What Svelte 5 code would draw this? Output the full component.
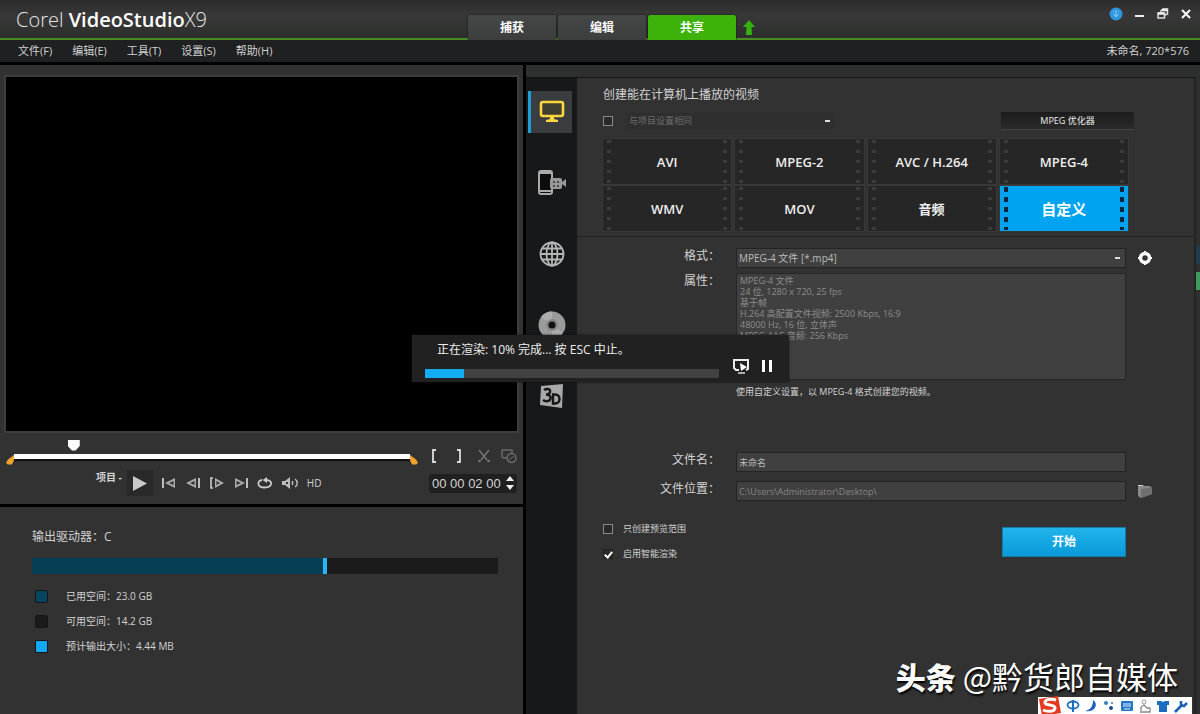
<script lang="ts">
	const steps = ['捕获', '编辑', '共享'];
	const menus = ['文件(F)', '编辑(E)', '工具(T)', '设置(S)', '帮助(H)'];
	const formats = ['AVI', 'MPEG-2', 'AVC / H.264', 'MPEG-4', 'WMV', 'MOV', '音频', '自定义'];
	const profile = [
		'MPEG-4 文件',
		'24 位, 1280 x 720, 25 fps',
		'基于帧',
		'H.264 高配置文件视频: 2500 Kbps, 16:9',
		'48000 Hz, 16 位, 立体声',
		'MPEG AAC 音频: 256 Kbps'
	];
	const drive = [
		{ kind: 'used', label: '已用空间：', size: '23.0 GB' },
		{ kind: 'free', label: '可用空间：', size: '14.2 GB' },
		{ kind: 'output', label: '预计输出大小：', size: '4.44 MB' }
	];
	const usedPercent = 62.5;
	const renderPercent = 13.3;

	let activeStep = $state('共享');
	let activeFormat = $state('自定义');
	let position = $state(14);
	let fileName = $state('未命名');
	let location = $state('C:\\Users\\Administrator\\Desktop\\');
	let timecode = $state('00 00 02 00');
	let smartRender = $state(true);
	let previewOnly = $state(false);
	let sameAsProject = $state(false);
</script>

<div class="app">
	<header class="titlebar">
		<h1 class="logo">Corel <b>VideoStudio</b>X9</h1>
		<nav class="steps">
			{#each steps as step}
				<button class="step" class:active={activeStep === step} onclick={() => (activeStep = step)}>{step}</button>
			{/each}
			<button class="icon-btn upload" aria-label="上传">
				<svg width="12" height="15" viewBox="0 0 12 15"><path d="M6 0 12 7H8.500L9 15H3L3.500 7H0Z" fill="#35b20d" /></svg>
			</button>
		</nav>
		<div class="window-buttons">
			<button class="icon-btn" aria-label="信息">
				<svg width="14" height="14" viewBox="0 0 14 14"><circle cx="7" cy="7" r="6.500" fill="#2d95dc" /><path d="M7 3v6M4.500 7 7 10 9.500 7M4 4.500h1M9 4.500h1" stroke="#8ed0fa" fill="none" /></svg>
			</button>
			<button class="icon-btn" aria-label="最小化">
				<svg width="10" height="14" viewBox="0 0 10 14"><path d="M0 8h9v2H0z" fill="#eee" /></svg>
			</button>
			<button class="icon-btn" aria-label="还原">
				<svg width="12" height="14" viewBox="0 0 12 14"><path d="M4 5V3.500l2-1.500h4.500v5L8 8M1 6h6.500v5H1z" fill="none" stroke="#ddd" stroke-width="1.500" /><path d="M1 6.500h6.500M5 3h5.500" stroke="#eee" stroke-width="2.500" /></svg>
			</button>
			<button class="icon-btn" aria-label="关闭">
				<svg width="10" height="14" viewBox="0 0 10 14"><path d="m1 3 8 8M9 3l-8 8" stroke="#fff" stroke-width="2" /></svg>
			</button>
		</div>
	</header>

	<div class="menubar">
		<div class="menus">
			{#each menus as menu}
				<button class="menu">{menu}</button>
			{/each}
		</div>
		<span>未命名, 720*576</span>
	</div>

	<main class="workspace">
		<div class="left">
			<section class="preview">
				<div class="video"></div>
				<div class="scrub-row">
					<div class="scrubber">
						<svg width="8" height="11" viewBox="0 0 8 11"><path d="M8 1v5L6 10.500H2L0 9 2 5.500Z" fill="#f2a32c" /></svg>
						<input type="range" min="0" max="100" bind:value={position} aria-label="播放位置" />
						<svg width="8" height="11" viewBox="0 0 8 11"><path d="M0 1v5L2 10.500H6L8 9 6 5.500Z" fill="#f2a32c" /></svg>
					</div>
					<div class="trim-buttons">
						<button class="icon-btn" aria-label="开始标记"><svg width="16" height="16" viewBox="0 0 16 16"><path d="M10 2H7v12h3" fill="none" stroke="#ddd" stroke-width="1.800" /></svg></button>
						<button class="icon-btn" aria-label="结束标记"><svg width="16" height="16" viewBox="0 0 16 16"><path d="M6 2h3v12H6" fill="none" stroke="#ddd" stroke-width="1.800" /></svg></button>
						<button class="icon-btn" aria-label="剪切"><svg width="16" height="16" viewBox="0 0 16 16"><path d="m3 2 8 10M13 2 5 12" stroke="#777" stroke-width="1.300" /><circle cx="3.500" cy="13" r="1.300" fill="#777" /><circle cx="12.500" cy="13" r="1.300" fill="#777" /></svg></button>
						<button class="icon-btn" aria-label="扩大"><svg width="16" height="16" viewBox="0 0 16 16"><path d="M6 10H2L1 8V2h10v3" fill="none" stroke="#6a6a6a" stroke-width="1.500" /><circle cx="10.500" cy="10" r="4.500" fill="none" stroke="#6a6a6a" stroke-width="1.500" /><path d="m8 12 5-4" stroke="#6a6a6a" /></svg></button>
					</div>
				</div>
				<div class="transport">
					<span class="mode">项目 -</span>
					<div class="player-buttons">
						<button class="icon-btn play" aria-label="播放"><svg width="16" height="16" viewBox="0 0 16 16"><path d="M1 1v15l14-7.500Z" fill="#c9c9c9" /></svg></button>
						<button class="icon-btn" aria-label="起始"><svg width="16" height="12" viewBox="0 0 16 12"><path d="M2 1v10" stroke="#ccc" stroke-width="1.800" /><path d="M14 1v10L4 6Z" fill="#aaa" /><path d="M12.500 4v4L8 6Z" fill="#333" /></svg></button>
						<button class="icon-btn" aria-label="上一帧"><svg width="16" height="12" viewBox="0 0 16 12"><path d="M14 1v10" stroke="#ccc" stroke-width="1.800" /><path d="M11 1v10L1 6Z" fill="#aaa" /><path d="M9.500 4v4L5 6Z" fill="#333" /></svg></button>
						<button class="icon-btn" aria-label="下一帧"><svg width="16" height="12" viewBox="0 0 16 12"><path d="M4 1H2v10h2" fill="none" stroke="#ccc" stroke-width="1.600" /><path d="M6 1v10l9-5Z" fill="#aaa" /><path d="M7.500 4v4L11 6Z" fill="#333" /></svg></button>
						<button class="icon-btn" aria-label="结束"><svg width="16" height="12" viewBox="0 0 16 12"><path d="M14 1v10" stroke="#ccc" stroke-width="1.800" /><path d="M2 1v10l10-5Z" fill="#aaa" /><path d="M3.500 4v4L8 6Z" fill="#333" /></svg></button>
						<button class="icon-btn" aria-label="重复"><svg width="16" height="12" viewBox="0 0 16 12"><path d="M5 3C2 3.500 1 5 1.500 7.500c1 4 11 4 12.500 0C15 5 13 3 9 3" fill="none" stroke="#ccc" stroke-width="1.800" /><path d="M10 0 5.500 3 10 6Z" fill="#ccc" /></svg></button>
						<button class="icon-btn" aria-label="音量"><svg width="18" height="12" viewBox="0 0 18 12"><path d="M1 4h3l5-4v12L4 8H1Z" fill="#bbb" /><path d="M5 5h2v2H5z" fill="#333" /><path d="M11.500 4v4M14 2c3 2 3 6 0 8" fill="none" stroke="#bbb" stroke-width="1.500" /></svg></button>
						<button class="icon-btn hd">HD</button>
					</div>
					<div class="timecode">
						<input bind:value={timecode} aria-label="时间码" />
						<button class="icon-btn" aria-label="调整时间码"><svg width="8" height="16" viewBox="0 0 8 16"><path d="m4 1 4 5H0ZM4 15l4-5H0Z" fill="#eee" /></svg></button>
					</div>
				</div>
			</section>

			<section class="drive">
				<h2>输出驱动器：C</h2>
				<div class="drive-bar" role="meter" aria-valuenow={usedPercent} aria-label="已用空间">
					<div class="drive-used" style="width: {usedPercent}%"></div>
				</div>
				<ul>
					{#each drive as item}
						<li><i class="swatch {item.kind}"></i>{item.label}{item.size}</li>
					{/each}
				</ul>
			</section>
		</div>

		<div class="right">
			<aside class="targets">
				<button class="target active" aria-label="计算机">
					<svg width="26" height="24" viewBox="0 0 26 24"><rect x="2" y="2" width="22" height="14" rx="2" fill="#3f3d30" stroke="#fbd63d" stroke-width="2.600" /><path d="M11 16h4v3l4 1v2H7v-2l4-1Z" fill="#fbd63d" /></svg>
				</button>
				<button class="target" aria-label="设备">
					<svg width="30" height="28" viewBox="0 0 30 28"><rect x="2" y="2" width="13" height="23" rx="2" fill="#0d0d0d" stroke="#aaa" stroke-width="2" /><path d="M2 22h13M2 4h13" stroke="#aaa" stroke-width="2" /><rect x="13" y="9" width="12" height="11" rx="2" fill="#999" /><path d="m25 13 4-3v8l-4-3Z" fill="#999" /><path d="M16 12h2v2h-2zM20 12h2v2h-2zM16 16h2v2h-2zM20 16h2v2h-2z" fill="#4a4a4a" /></svg>
				</button>
				<button class="target" aria-label="网络">
					<svg width="26" height="26" viewBox="0 0 26 26" fill="none" stroke="#b5b5b5" stroke-width="1.800"><circle cx="13" cy="13" r="11.500" /><ellipse cx="13" cy="13" rx="5.500" ry="11.500" /><path d="M13 1v24M1 13h24M3 7.500h20M3 18.500h20" /></svg>
				</button>
				<button class="target" aria-label="光盘">
					<svg width="28" height="28" viewBox="0 0 28 28"><circle cx="14" cy="14" r="13.500" fill="#9b9b9b" /><path d="M14 14 3 6A13.500 13.500 0 0 1 14 .5ZM14 14l11 8a13.500 13.500 0 0 1-11 5.500Z" fill="#adadad" /><circle cx="14" cy="14" r="6" fill="#858585" /><circle cx="14" cy="14" r="3.500" fill="#111" /></svg>
				</button>
				<button class="target" aria-label="3D 影片">
					<svg width="26" height="26" viewBox="0 0 26 26"><path d="M2 3 24 1l-1 24L1 22Z" fill="#a8a8a8" /><path d="M5 7c3-2 7-1 6 2-.5 2-2 2.500-4 2.500 3 0 5 1.500 4.500 4-.5 3-5 3.500-7.500 1.500M14 11.500v9h2c6 0 6-9 0-9Z" fill="none" stroke="#161616" stroke-width="2.400" /></svg>
				</button>
			</aside>

			<div class="share">
				<section class="format-picker">
					<h2>创建能在计算机上播放的视频</h2>
					<div class="project-row">
						<input type="checkbox" bind:checked={sameAsProject} aria-label="与项目设置相同" />
						<select class="same-as" disabled aria-label="项目设置">
							<option>与项目设置相同</option>
						</select>
						<button class="optimizer">MPEG 优化器</button>
					</div>
					<div class="formats">
						{#each formats as format}
							<button class="format" class:selected={activeFormat === format} onclick={() => (activeFormat = format)}>
								<span>{format}</span>
							</button>
						{/each}
					</div>
				</section>

				<section class="settings">
					<div class="row">
						<label for="format">格式：</label>
						<select id="format" class="field">
							<option>MPEG-4 文件 [*.mp4]</option>
						</select>
						<button class="icon-btn" aria-label="选项">
							<svg width="14" height="14" viewBox="0 0 14 14"><circle cx="7" cy="7" r="4.500" fill="none" stroke="#fff" stroke-width="3.500" /><path d="M7 0v2M7 12v2M0 7h2M12 7h2" stroke="#fff" stroke-width="2" /></svg>
						</button>
					</div>
					<div class="row profile-row">
						<span class="label">属性：</span>
						<div class="profile">
							{#each profile as line}
								<p>{line}</p>
							{/each}
						</div>
					</div>
					<p class="hint">使用自定义设置，以 MPEG-4 格式创建您的视频。</p>
					<div class="row">
						<label for="filename">文件名：</label>
						<input id="filename" class="field name" bind:value={fileName} />
					</div>
					<div class="row">
						<label for="location">文件位置：</label>
						<input id="location" class="field path" bind:value={location} />
						<button class="icon-btn" aria-label="浏览">
							<svg width="16" height="16" viewBox="0 0 16 16"><path d="M1 2h5l1 1.500h6V6H1Z" fill="#d0d0d0" /><path d="M1 3h12l2 2v6L4 15 1 13Z" fill="#8b8b8b" /><path d="m4 6 11-2v7L4 15Z" fill="#707070" /></svg>
						</button>
					</div>
					<div class="finish">
						<div class="checks">
							<label><input type="checkbox" bind:checked={previewOnly} />只创建预览范围</label>
							<label><input type="checkbox" bind:checked={smartRender} />启用智能渲染</label>
						</div>
						<button class="start">开始</button>
					</div>
				</section>
			</div>
			<div class="edge"><i></i><i></i></div>
		</div>
	</main>

	<div class="rendering" role="dialog" aria-label="渲染进度">
		<p>正在渲染: 10% 完成... 按 ESC 中止。</p>
		<div class="render-row">
			<div class="render-bar" role="progressbar" aria-valuenow={renderPercent} aria-label="进度">
				<div class="render-done" style="width: {renderPercent}%"></div>
			</div>
			<button class="icon-btn" aria-label="预览">
				<svg width="18" height="18" viewBox="0 0 18 18"><path d="M7 13H4L2 11V3h14v9l-2 1" fill="none" stroke="#eee" stroke-width="2" /><path d="m8 6 7 4-6 4Z" fill="#fff" /><path d="M6 16h7" stroke="#ddd" stroke-width="1.500" /></svg>
			</button>
			<button class="icon-btn" aria-label="暂停">
				<svg width="14" height="14" viewBox="0 0 14 14"><path d="M2 1h3v12H2zM9 1h3v12H9z" fill="#fff" /></svg>
			</button>
		</div>
	</div>

	<div class="watermark"><b>头条</b> @黔货郎自媒体</div>

	<div class="ime">
		<svg class="sogou" width="24" height="20" viewBox="0 0 24 20"><path d="M1 3 20 0l3 17-19 3Z" fill="#e4391f" /><path d="M18 4C12 2 6 4 7 7c1 3 10 1 10 5 0 4-8 4-12 2" fill="none" stroke="#fff" stroke-width="3" /></svg>
		<svg width="14" height="14" viewBox="0 0 14 14"><path d="M7 1v12" stroke="#1c6cc0" stroke-width="2" /><ellipse cx="7" cy="6" rx="5.500" ry="3.500" fill="none" stroke="#1c6cc0" stroke-width="1.800" /></svg>
		<svg width="14" height="14" viewBox="0 0 14 14"><path d="M9 1c6 4 2 13-8 11 5-1 8-4 8-11Z" fill="#1c5fc0" /></svg>
		<svg width="14" height="14" viewBox="0 0 14 14"><circle cx="4" cy="4" r="2" fill="#3c7ac0" /><circle cx="9" cy="9" r="2" fill="#1c4c90" /><circle cx="10" cy="4" r="1" fill="#3c7ac0" /></svg>
		<svg width="14" height="14" viewBox="0 0 14 14"><rect x="1" y="2" width="12" height="10" rx="1" fill="#2678c4" /><path d="M3 5h8M3 7h8M4 10h6" stroke="#d8ecff" /></svg>
		<svg width="14" height="14" viewBox="0 0 14 14"><circle cx="6" cy="3" r="2" fill="none" stroke="#999" /><path d="M3 12V8l3-2 3 3h3v4H2" fill="none" stroke="#888" stroke-width="1.300" /></svg>
		<svg width="14" height="14" viewBox="0 0 14 14"><path d="M1 2h4l2 1 2-1h4v4h-2v7H3V6H1Z" fill="#1c6cc0" /></svg>
		<svg width="14" height="14" viewBox="0 0 14 14"><path d="M1 13 8 6M7 2v4l3 1 3-3" fill="none" stroke="#1c5fb0" stroke-width="2.600" /></svg>
	</div>
</div>

<style>
	:global(body) {
		background: #323232;
	}

	.app {
		position: relative;
		display: flex;
		flex-direction: column;
		min-height: 100vh;
		overflow: hidden;
		background: #000;
		color: #d2d2d2;
		font-family: 'Open Sans', 'Noto Sans CJK SC', sans-serif;
		font-size: 11px;
		line-height: 16px;
	}

	h1,
	h2,
	p,
	ul {
		margin: 0;
		padding: 0;
		font-weight: normal;
	}

	button,
	input,
	select {
		box-sizing: border-box;
		margin: 0;
		font: inherit;
		color: inherit;
	}

	button {
		padding: 0;
		border: 0;
		background: none;
		cursor: pointer;
	}

	svg {
		display: block;
		flex: none;
	}

	.icon-btn {
		display: flex;
		align-items: center;
		justify-content: center;
	}

	/* Title bar */
	.titlebar {
		display: grid;
		grid-template-columns: 39fr 30fr 31fr;
		height: 38px;
		border-bottom: 2px solid #488e22;
		background: linear-gradient(#2b2b2b, #383838 40%, #2c2f2c);
	}

	.logo {
		padding-left: 16px;
		color: #e6e6e6;
		font-size: 20px;
		font-weight: 300;
		line-height: 40px;
		white-space: nowrap;
	}

	.logo b {
		color: #fff;
		font-weight: 600;
	}

	.steps {
		display: flex;
		align-items: flex-end;
		gap: 2px;
	}

	.step {
		width: 88px;
		height: 25px;
		border-radius: 2px 2px 0 0;
		background: linear-gradient(#464747, #3c3d3d);
		color: #fff;
		font-size: 12px;
		font-weight: bold;
		box-shadow: 0 0 2px #111;
	}

	.step.active {
		background: #3cb20b;
	}

	.upload {
		height: 25px;
		padding-left: 5px;
	}

	.window-buttons {
		display: flex;
		justify-content: flex-end;
		align-items: flex-start;
		gap: 12px;
		padding: 7px 9px 0 0;
	}

	.menubar {
		display: flex;
		justify-content: space-between;
		align-items: center;
		height: 22px;
		margin-bottom: 3px;
		padding: 0 11px 0 18px;
		background: #1e2021;
	}

	.menus {
		display: flex;
		gap: 20px;
	}

	/* Workspace */
	.workspace {
		display: grid;
		grid-template-columns: 523fr 674fr;
		flex: 1;
		gap: 3px;
	}

	.left {
		display: flex;
		flex-direction: column;
		gap: 3px;
		min-width: 0;
	}

	.preview,
	.drive {
		background: #323232;
	}

	.preview {
		padding: 12px 6px 7px;
	}

	.video {
		aspect-ratio: 511 / 354;
		background: #000;
		box-shadow: 0 0 0 2px #3c3e3e;
	}

	.scrub-row,
	.transport {
		display: flex;
		align-items: center;
		justify-content: space-between;
	}

	.scrub-row {
		padding-top: 12px;
	}

	.scrubber {
		display: flex;
		align-items: center;
		flex: 1;
	}

	.scrubber svg {
		margin-top: 6px;
	}

	.scrubber input {
		flex: 1;
		width: 100%;
		height: 26px;
		appearance: none;
		background: none;
	}

	.scrubber input::-webkit-slider-runnable-track {
		height: 5px;
		background: #fff;
		box-shadow: 0 2px #111;
	}

	.scrubber input::-webkit-slider-thumb {
		appearance: none;
		width: 12px;
		height: 11px;
		margin-top: -14px;
		background: #fff;
		clip-path: polygon(0 0, 100% 0, 100% 60%, 65% 100%, 35% 100%, 0 60%);
	}

	.trim-buttons {
		display: flex;
		gap: 9px;
		padding-left: 8px;
	}

	.transport {
		height: 28px;
	}

	.mode {
		align-self: flex-start;
		padding-left: 90px;
		font-size: 10px;
		font-weight: bold;
	}

	.player-buttons {
		display: flex;
		align-items: center;
		gap: 8px;
		margin-right: auto;
		padding-left: 5px;
	}

	.play {
		width: 26px;
		height: 26px;
		background: #292929;
	}

	.hd {
		font-size: 10px;
	}

	.timecode {
		display: flex;
		align-items: center;
		padding: 0 3px;
		border-radius: 3px;
		background: #202020;
	}

	.timecode input {
		width: 74px;
		height: 19px;
		padding: 0;
		border: 0;
		background: none;
		font-family: 'Liberation Sans', sans-serif;
		font-size: 13px;
	}

	/* Drive usage */
	.drive {
		flex: 1;
		padding: 22px 25px 0 32px;
	}

	.drive h2 {
		font-size: 12px;
	}

	.drive-bar {
		height: 16px;
		margin: 13px 0 14px;
		background: #1b1b1b;
	}

	.drive-used {
		height: 100%;
		border-right: 4px solid #27b6f4;
		background: #053e55;
	}

	.drive ul {
		display: flex;
		flex-direction: column;
		gap: 9px;
		list-style: none;
		font-size: 10px;
	}

	.drive li {
		display: flex;
		align-items: center;
		padding-left: 3px;
	}

	.swatch {
		width: 11px;
		height: 11px;
		margin-right: 18px;
		border: 1px solid #151515;
		border-radius: 2px;
	}

	.swatch.used {
		background: #064460;
	}

	.swatch.free {
		background: #1b1b1b;
	}

	.swatch.output {
		background: #12a8f5;
	}

	/* Share panel */
	.right {
		display: flex;
		padding-top: 12px;
		background: #2e2f2f;
	}

	.targets {
		display: flex;
		flex-direction: column;
		gap: 29px;
		width: 44px;
		padding: 13px 5px 13px 2px;
		border-top: 1px solid #111;
		background: #161819;
	}

	.target {
		display: flex;
		align-items: center;
		justify-content: center;
		height: 42px;
		border-left: 3px solid transparent;
	}

	.target.active {
		border-color: #1d9ed8;
		background: #3b3c40;
	}

	.share {
		flex: 1;
		border-top: 1px solid #161616;
		border-right: 2px solid #242424;
		background: #323232;
	}

	.format-picker {
		padding: 9px 66px 5px 26px;
		border-bottom: 1px solid #222;
	}

	.format-picker h2 {
		font-size: 12px;
	}

	.project-row {
		display: flex;
		align-items: center;
		height: 20px;
		margin: 8px 0;
	}

	input[type='checkbox'] {
		display: grid;
		place-items: center;
		width: 10px;
		height: 10px;
		border: 1px solid #8a8a8a;
		background: #2a2a2a;
		appearance: none;
	}

	input[type='checkbox']:checked {
		border-color: #222;
	}

	input[type='checkbox']:checked::before {
		content: '';
		width: 3px;
		height: 6px;
		border: solid #fff;
		border-width: 0 2px 2px 0;
		transform: rotate(40deg);
	}

	select {
		appearance: none;
		background: linear-gradient(#ddd, #ddd) no-repeat right 5px center / 5px 2px;
	}

	.same-as {
		width: 210px;
		height: 16px;
		margin: 0 auto 0 12px;
		padding: 0 4px;
		border: 0;
		background-color: #2f2f2f;
		color: #6c6c6c;
		font-size: 9px;
		line-height: 14px;
		opacity: 1;
	}

	.optimizer {
		width: 133px;
		height: 18px;
		margin-right: -6px;
		border-bottom: 1px solid #444;
		background: linear-gradient(#1c1c1c, #2a2a2a);
		color: #eee;
		font-size: 9px;
	}

	.formats {
		display: grid;
		grid-template-columns: repeat(4, 1fr);
		gap: 2px 4px;
	}

	.format {
		display: flex;
		align-items: center;
		justify-content: space-between;
		height: 45px;
		padding: 0 4px;
		background: #262626;
		color: #eee;
		font-size: 13px;
		font-weight: 600;
		box-shadow: 0 0 0 1px #383838;
	}

	.format::before,
	.format::after {
		content: '';
		width: 4px;
		height: 43px;
		background: repeating-linear-gradient(#3b3b3b 0 3px, transparent 3px 10px);
	}

	.format.selected {
		background: #00a3ef;
		color: #fff;
		font-size: 15px;
	}

	.format.selected::before,
	.format.selected::after {
		background: repeating-linear-gradient(#0a2638 0 5px, transparent 5px 10px);
	}

	.settings {
		display: flex;
		flex-direction: column;
		padding: 11px 30px 0 26px;
	}

	.row {
		display: grid;
		grid-template-columns: 133px 1fr 38px;
		margin-bottom: 9px;
	}

	.row label,
	.row .label {
		padding-right: 16px;
		text-align: right;
		font-size: 12px;
	}

	.field {
		width: 100%;
		height: 20px;
		padding: 0 2px;
		border: 1px solid #242424;
		background-color: #404040;
		color: #bbb;
		font-size: 10px;
	}

	.field.name,
	.field.path {
		font-size: 9px;
	}

	.field.path {
		color: #858585;
	}

	.profile-row {
		margin: -4px 0 4px;
	}

	.profile {
		box-sizing: border-box;
		min-height: 107px;
		padding: 1px 3px;
		border: 1px solid #272727;
		background: #404040;
		color: #8d8d8d;
		font-size: 9px;
		line-height: 11px;
	}

	.hint {
		margin: 0 0 52px 133px;
		font-size: 9px;
	}

	.finish {
		display: flex;
		justify-content: space-between;
		align-items: flex-start;
		margin-top: 11px;
		padding-right: 38px;
	}

	.checks {
		display: flex;
		flex-direction: column;
		gap: 9px;
	}

	.checks label {
		display: flex;
		align-items: center;
		gap: 10px;
		font-size: 9px;
	}

	.start {
		width: 124px;
		height: 30px;
		margin-top: 6px;
		border: 1px solid #167ba6;
		background: linear-gradient(#21b4ec, #0a9ad9);
		color: #fff;
		font-size: 12px;
		font-weight: bold;
	}

	.edge {
		display: flex;
		flex-direction: column;
		gap: 8px;
		width: 4px;
		padding-top: 169px;
	}

	.edge i {
		height: 18px;
		background: #23394c;
	}

	.edge i + i {
		background: #3f9a5b;
	}

	/* Rendering progress */
	.rendering {
		position: absolute;
		top: 335px;
		left: 412px;
		box-sizing: border-box;
		width: 377px;
		height: 47px;
		padding: 7px 15px 0 13px;
		background: #212121;
		color: #eee;
		box-shadow: 0 0 2px #111;
	}

	.rendering p {
		padding-left: 12px;
		font-size: 12px;
	}

	.render-row {
		display: flex;
		align-items: center;
		gap: 10px;
		height: 16px;
	}

	.render-bar {
		flex: 1;
		height: 9px;
		margin: 14px 3px 0 0;
		background: #424242;
	}

	.render-done {
		height: 100%;
		background: #13adf5;
	}

	.watermark {
		position: absolute;
		right: 22px;
		bottom: 16px;
		color: #fff;
		font-family: 'Noto Sans CJK SC', sans-serif;
		font-size: 31px;
		line-height: 44px;
		text-shadow: 1px 2px 2px #000;
	}

	.watermark b {
		font-size: 30px;
		font-weight: 900;
	}

	.ime {
		position: absolute;
		right: 8px;
		bottom: 0;
		display: flex;
		align-items: center;
		gap: 4px;
		height: 17px;
		padding-right: 4px;
		background: #fff;
	}
</style>
